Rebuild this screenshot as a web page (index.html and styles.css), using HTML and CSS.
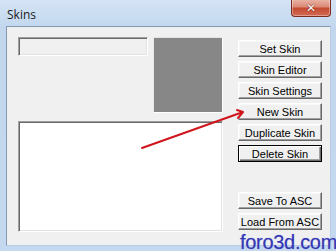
FILE: index.html
```html
<!DOCTYPE html>
<html>
<head>
<meta charset="utf-8">
<link rel="stylesheet" href="styles.css">
</head>
<body>
<div class="window">
  <div class="titlebar">
    <span class="title">Skins</span>
    <div class="close"><span class="x">✕</span></div>
  </div>
  <div class="frame">
    <div class="client">
      <div class="leftcol">
        <div class="toprow">
          <div class="textbox"></div>
          <div class="preview"></div>
        </div>
        <div class="listbox"></div>
      </div>
      <div class="buttons">
        <div class="btn">Set Skin</div>
        <div class="btn">Skin Editor</div>
        <div class="btn">Skin Settings</div>
        <div class="btn">New Skin</div>
        <div class="btn">Duplicate Skin</div>
        <div class="btn default">Delete Skin</div>
        <div class="btn spaced">Save To ASC</div>
        <div class="btn">Load From ASC</div>
      </div>
    </div>
  </div>
  <svg class="arrow" width="336" height="251" viewBox="0 0 336 251">
    <path d="M142 148 L243 112 M243 112 L237 110 M243 112 L238 118" stroke="#d0151c" stroke-width="2" fill="none" stroke-linecap="round"/>
  </svg>
  <div class="watermark">foro3d.com</div>
</div>
</body>
</html>
```
FILE: styles.css
```css
html, body {
  margin: 0;
  padding: 0;
  background: #c9dcf1;
}
.window {
  position: relative;
  width: 336px;
  height: 251px;
  overflow: hidden;
  background: linear-gradient(180deg, #d5e4f5 0px, #c2d7ee 27px, #c4d8ef 100%);
}
.titlebar {
  height: 26px;
  position: relative;
  display: flex;
  align-items: center;
}
.title {
  font-family: "Open Sans", "Noto Sans", sans-serif;
  font-size: 12px;
  color: #1a1a1a;
  margin-left: 7px;
  margin-top: 2px;
}
.close {
  position: absolute;
  left: 291px;
  top: -1px;
  width: 40px;
  height: 18px;
  box-sizing: border-box;
  border: 1px solid #7c2b22;
  border-top: none;
  border-radius: 0 0 4px 4px;
  background: linear-gradient(180deg, #eab8ab 0%, #dc8a76 45%, #c44a33 55%, #d36a52 100%);
  box-shadow: inset 0 0 0 1px rgba(255,255,255,0.35);
  display: flex;
  align-items: center;
  justify-content: center;
}
.x {
  color: #fff;
  font-family: "DejaVu Sans", sans-serif;
  font-size: 12px;
  font-weight: bold;
  text-shadow: 0 0 1px #6b1a12, 0 0 1px #6b1a12;
  line-height: 1;
}
.frame {
  margin-left: 6px;
  width: 325px;
  height: 220px;
  box-sizing: border-box;
  border: 1px solid #8299b3;
  border-bottom-color: #b8cde3;
  border-right-color: #b8cde3;
}
.client {
  background: #f0f0f0;
  height: 100%;
  box-sizing: border-box;
  padding: 10px 0 0 11px;
  display: flex;
  font-family: "Liberation Sans", Arial, sans-serif;
}
.leftcol {
  width: 205px;
  display: flex;
  flex-direction: column;
}
.toprow {
  display: flex;
  gap: 5px;
  align-items: flex-start;
}
.textbox {
  width: 130px;
  height: 19px;
  box-sizing: border-box;
  background: #f0f0f0;
  border: 1px solid;
  border-color: #a0a0a0 #fff #fff #a0a0a0;
  box-shadow: inset 1px 1px 0 #696969, inset -1px -1px 0 #e3e3e3;
}
.preview {
  width: 70px;
  height: 76px;
  box-sizing: border-box;
  background: #878787;
  border: 1px solid #fff;
  border-top-color: #e3e3e3;
  border-left-color: #e8e8e8;
}
.listbox {
  margin-top: 8px;
  width: 205px;
  height: 111px;
  box-sizing: border-box;
  background: #fff;
  border: 1px solid;
  border-color: #a0a0a0 #fff #fff #a0a0a0;
  box-shadow: inset 1px 1px 0 #696969, inset -1px -1px 0 #e3e3e3;
}
.buttons {
  margin-left: 15px;
  padding-top: 3px;
  display: flex;
  flex-direction: column;
  gap: 4px;
}
.btn {
  width: 84px;
  height: 17px;
  box-sizing: border-box;
  background: #f0f0f0;
  border: 1px solid;
  border-color: #fff #696969 #696969 #fff;
  box-shadow: inset -1px -1px 0 #a0a0a0, inset 1px 1px 0 #f8f8f8;
  font-size: 11px;
  color: #000;
  display: flex;
  align-items: center;
  justify-content: center;
  line-height: 1;
  padding-top: 1px;
}
.btn.default {
  border-color: #000;
  box-shadow: inset 1px 1px 0 #fff, inset -1px -1px 0 #696969, inset -2px -2px 0 #a0a0a0;
}
.btn.spaced {
  margin-top: 26px;
}
.arrow {
  position: absolute;
  left: 0;
  top: 0;
  pointer-events: none;
}
.watermark {
  position: absolute;
  left: 240px;
  top: 232px;
  font-family: "Liberation Sans", Arial, sans-serif;
  font-size: 20px;
  color: #3636b4;
  letter-spacing: -0.3px;
  text-shadow: 0 0 1px #8e9ce0;
  line-height: 1;
}
```
